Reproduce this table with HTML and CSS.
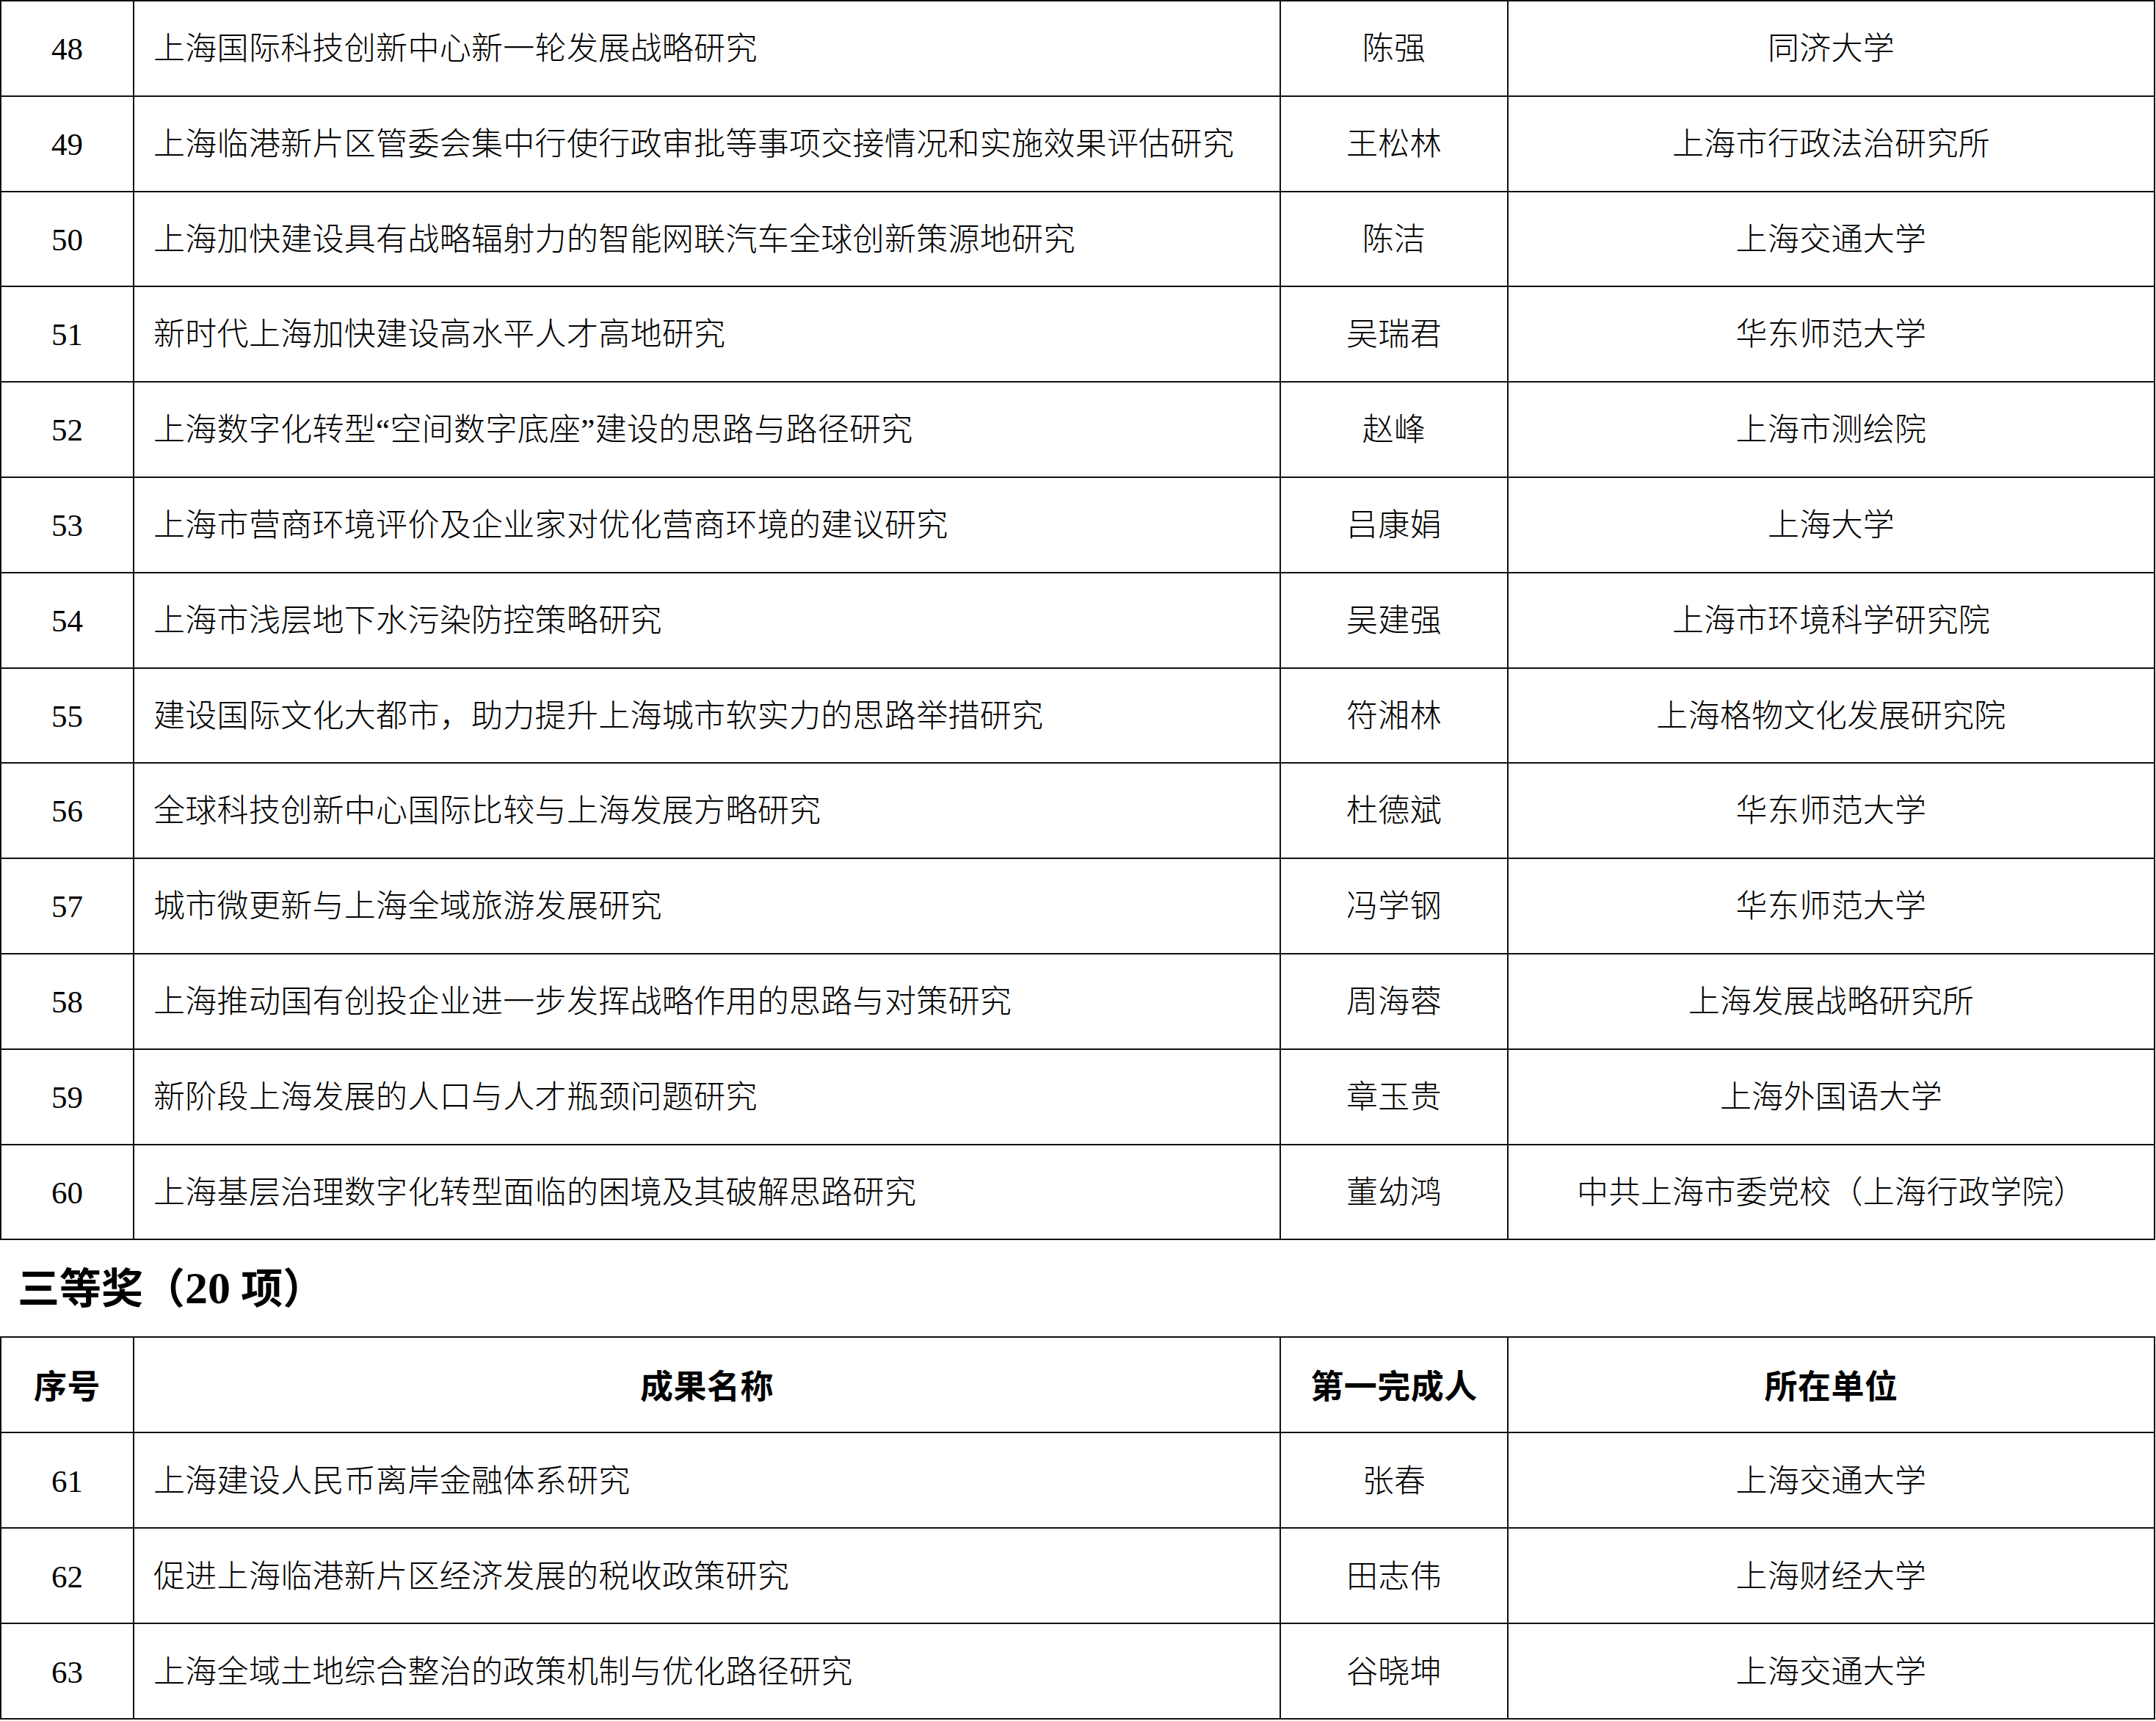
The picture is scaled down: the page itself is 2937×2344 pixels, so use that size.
FILE: index.html
```html
<!DOCTYPE html>
<html lang="zh-CN">
<head>
<meta charset="utf-8">
<title>上海市决策咨询研究成果奖</title>
<link rel="stylesheet" href="styles.css">
</head>
<body>
<table class="awards first">
  <colgroup><col class="c-no"><col class="c-title"><col class="c-person"><col class="c-unit"></colgroup>
  <tbody>
    <tr><td class="no">48</td><td class="title">上海国际科技创新中心新一轮发展战略研究</td><td class="center">陈强</td><td class="center">同济大学</td></tr>
    <tr><td class="no">49</td><td class="title">上海临港新片区管委会集中行使行政审批等事项交接情况和实施效果评估研究</td><td class="center">王松林</td><td class="center">上海市行政法治研究所</td></tr>
    <tr><td class="no">50</td><td class="title">上海加快建设具有战略辐射力的智能网联汽车全球创新策源地研究</td><td class="center">陈洁</td><td class="center">上海交通大学</td></tr>
    <tr><td class="no">51</td><td class="title">新时代上海加快建设高水平人才高地研究</td><td class="center">吴瑞君</td><td class="center">华东师范大学</td></tr>
    <tr><td class="no">52</td><td class="title">上海数字化转型“空间数字底座”建设的思路与路径研究</td><td class="center">赵峰</td><td class="center">上海市测绘院</td></tr>
    <tr><td class="no">53</td><td class="title">上海市营商环境评价及企业家对优化营商环境的建议研究</td><td class="center">吕康娟</td><td class="center">上海大学</td></tr>
    <tr><td class="no">54</td><td class="title">上海市浅层地下水污染防控策略研究</td><td class="center">吴建强</td><td class="center">上海市环境科学研究院</td></tr>
    <tr><td class="no">55</td><td class="title">建设国际文化大都市，助力提升上海城市软实力的思路举措研究</td><td class="center">符湘林</td><td class="center">上海格物文化发展研究院</td></tr>
    <tr><td class="no">56</td><td class="title">全球科技创新中心国际比较与上海发展方略研究</td><td class="center">杜德斌</td><td class="center">华东师范大学</td></tr>
    <tr><td class="no">57</td><td class="title">城市微更新与上海全域旅游发展研究</td><td class="center">冯学钢</td><td class="center">华东师范大学</td></tr>
    <tr><td class="no">58</td><td class="title">上海推动国有创投企业进一步发挥战略作用的思路与对策研究</td><td class="center">周海蓉</td><td class="center">上海发展战略研究所</td></tr>
    <tr><td class="no">59</td><td class="title">新阶段上海发展的人口与人才瓶颈问题研究</td><td class="center">章玉贵</td><td class="center">上海外国语大学</td></tr>
    <tr><td class="no">60</td><td class="title">上海基层治理数字化转型面临的困境及其破解思路研究</td><td class="center">董幼鸿</td><td class="center">中共上海市委党校（上海行政学院）</td></tr>
  </tbody>
</table>

<h2 class="section-title">三等奖（<span class="num">20</span> 项）</h2>

<table class="awards second">
  <colgroup><col class="c-no"><col class="c-title"><col class="c-person"><col class="c-unit"></colgroup>
  <thead>
    <tr><th>序号</th><th>成果名称</th><th>第一完成人</th><th>所在单位</th></tr>
  </thead>
  <tbody>
    <tr><td class="no">61</td><td class="title">上海建设人民币离岸金融体系研究</td><td class="center">张春</td><td class="center">上海交通大学</td></tr>
    <tr><td class="no">62</td><td class="title">促进上海临港新片区经济发展的税收政策研究</td><td class="center">田志伟</td><td class="center">上海财经大学</td></tr>
    <tr><td class="no">63</td><td class="title">上海全域土地综合整治的政策机制与优化路径研究</td><td class="center">谷晓坤</td><td class="center">上海交通大学</td></tr>
  </tbody>
</table>
</body>
</html>
```

FILE: styles.css
```css
html, body {
  margin: 0;
  padding: 0;
  background: #ffffff;
  color: #000000;
}

body {
  font-family: "Liberation Serif", "Noto Sans CJK SC", serif;
}

.awards {
  width: 2936px;
  table-layout: fixed;
  border-collapse: collapse;
  font-size: 43px;
  letter-spacing: 0.3px;
}

.c-no { width: 181px; }
.c-title { width: 1562px; }
.c-person { width: 310px; }
.c-unit { width: 881px; }

.awards td,
.awards th {
  border: 2px solid #111111;
  padding: 0;
  white-space: nowrap;
  vertical-align: middle;
  line-height: 1.2;
  font-weight: 300;
}

.first tr { height: 129.8px; }
.second tr { height: 130px; }

.awards td.no {
  text-align: center;
  font-weight: 400;
  letter-spacing: 0;
  padding-top: 2px;
}

.awards td.title {
  text-align: left;
  padding-left: 26px;
  padding-top: 2px;
}

.awards td.center {
  text-align: center;
  padding-top: 2px;
}

.awards th {
  font-family: "Noto Sans CJK SC", sans-serif;
  font-weight: 700;
  font-size: 45px;
  letter-spacing: 0.5px;
  text-align: center;
}

.section-title {
  margin: 0;
  height: 131px;
  line-height: 131px;
  padding-left: 24px;
  white-space: pre;
  font-family: "Liberation Serif", "Noto Sans CJK SC", serif;
  font-size: 57px;
  font-weight: 700;
}

.section-title .num {
  font-size: 62px;
}
```
